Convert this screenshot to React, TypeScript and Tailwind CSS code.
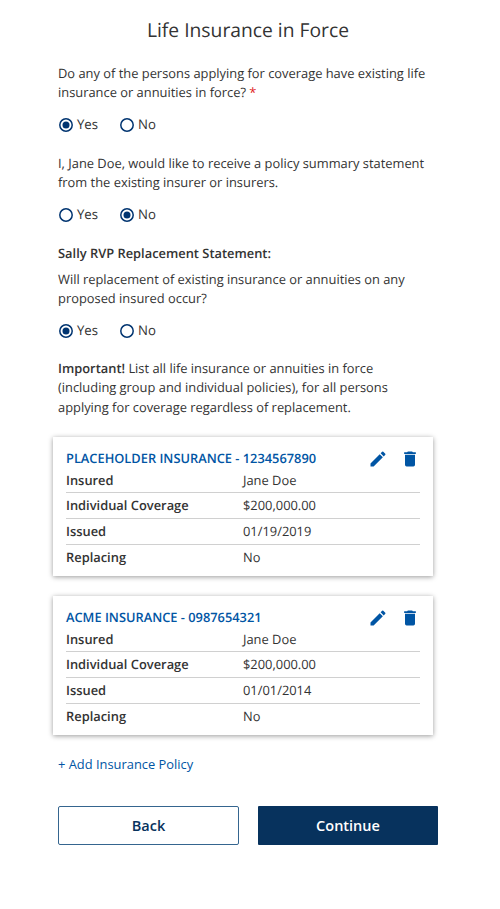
import React from "react";

function Radio({ label, checked, width }: { label: string; checked: boolean; width: string }) {
  return (
    <div className={`flex h-5 items-center ${width}`}>
      <svg width="16" height="16" viewBox="0 0 16 16" className="mr-[3px] shrink-0">
        <circle cx="8" cy="8" r="6.2" fill="none" stroke="#003470" strokeWidth="1.5" />
        {checked && <circle cx="8" cy="8" r="3.5" fill="#003470" />}
      </svg>
      <span className="text-[13.2px]">{label}</span>
    </div>
  );
}

function YesNo({ yes }: { yes: boolean }) {
  return (
    <div className="flex">
      <Radio label="Yes" checked={yes} width="w-[61px]" />
      <Radio label="No" checked={!yes} width="w-[50px]" />
    </div>
  );
}

function Policy({ title, issued }: { title: string; issued: string }) {
  const rows = [
    ["Insured", "Jane Doe"],
    ["Individual Coverage", "$200,000.00"],
    ["Issued", issued],
    ["Replacing", "No"],
  ];
  return (
    <section className="ml-[53px] h-[139px] w-[380px] bg-white px-[13px] pt-[12px] shadow-[0_1px_5px_rgba(0,0,0,0.4)]">
      <div className="flex h-[20px] items-center justify-between">
        <h2 className="whitespace-nowrap text-[12.84px] font-semibold text-[#0055a4]">{title}</h2>
        <div className="flex items-center gap-[12px]">
          <svg width="20" height="20" viewBox="0 0 24 24" fill="#0055a4"><path d="M3 17.25V21h3.75L17.81 9.94l-3.75-3.75L3 17.25zM20.71 7.04a1 1 0 0 0 0-1.41l-2.34-2.34a1 1 0 0 0-1.41 0l-1.83 1.83 3.75 3.75 1.83-1.83z" /></svg>
          <svg width="20" height="20" viewBox="0 0 24 24" fill="#0055a4"><path d="M6 19a2 2 0 0 0 2 2h8a2 2 0 0 0 2-2V7H6v12zM19 4h-3.5l-1-1h-5l-1 1H5v2h14V4z" /></svg>
        </div>
      </div>
      <dl>
        {rows.map(([k, v], i) => (
          <div key={k} className={`flex items-center ${i === 0 ? "h-[24px]" : "h-[26px]"} ${i < 3 ? "border-b border-[#d0d0d0]" : ""}`}>
            <dt className="w-[177px] font-semibold">{k}</dt>
            <dd>{v}</dd>
          </div>
        ))}
      </dl>
    </section>
  );
}

export default function App() {
  return (
    <main className="h-[909px] w-[500px] bg-white pt-[18px] font-['Open_Sans',sans-serif] text-[12.88px] leading-[19.3px] text-[#333333] [text-rendering:geometricPrecision]">
      <h1 className="ml-[58px] h-[46px] w-[380px] text-center text-[19.3px] leading-[24px]">Life Insurance in Force</h1>
      <div className="ml-[58px] w-[390px]">
        <p className="h-[51px]">Do any of the persons applying for coverage have existing life<br />insurance or annuities in force? <span className="text-[#e02020]">*</span></p>
        <YesNo yes={true} />
        <p className="mt-[19px] h-[51px]">I, Jane Doe, would like to receive a policy summary statement<br />from the existing insurer or insurers.</p>
        <YesNo yes={false} />
        <h2 className="mt-[19px] h-[26px] font-semibold">Sally RVP Replacement Statement:</h2>
        <p className="h-[51px]">Will replacement of existing insurance or annuities on any<br />proposed insured occur?</p>
        <YesNo yes={true} />
        <p className="mt-[18px] h-[78px]"><b className="font-semibold">Important!</b> List all life insurance or annuities in force<br />(including group and individual policies), for all persons<br />applying for coverage regardless of replacement.</p>
      </div>
      <Policy title="PLACEHOLDER INSURANCE - 1234567890" issued="01/19/2019" />
      <div className="h-[20px]" />
      <Policy title="ACME INSURANCE - 0987654321" issued="01/01/2014" />
      <button className="ml-[58px] mt-[20px] block text-[#0055a4]">+ Add Insurance Policy</button>
      <div className="ml-[58px] mt-[31.7px] flex gap-[19px] text-[14.5px] font-semibold">
        <button className="h-[39px] w-[181px] rounded-[2px] border border-[#35658f] text-[#07325d]">Back</button>
        <button className="h-[39px] w-[180px] rounded-[1px] bg-[#07325d] text-white">Continue</button>
      </div>
    </main>
  );
}
